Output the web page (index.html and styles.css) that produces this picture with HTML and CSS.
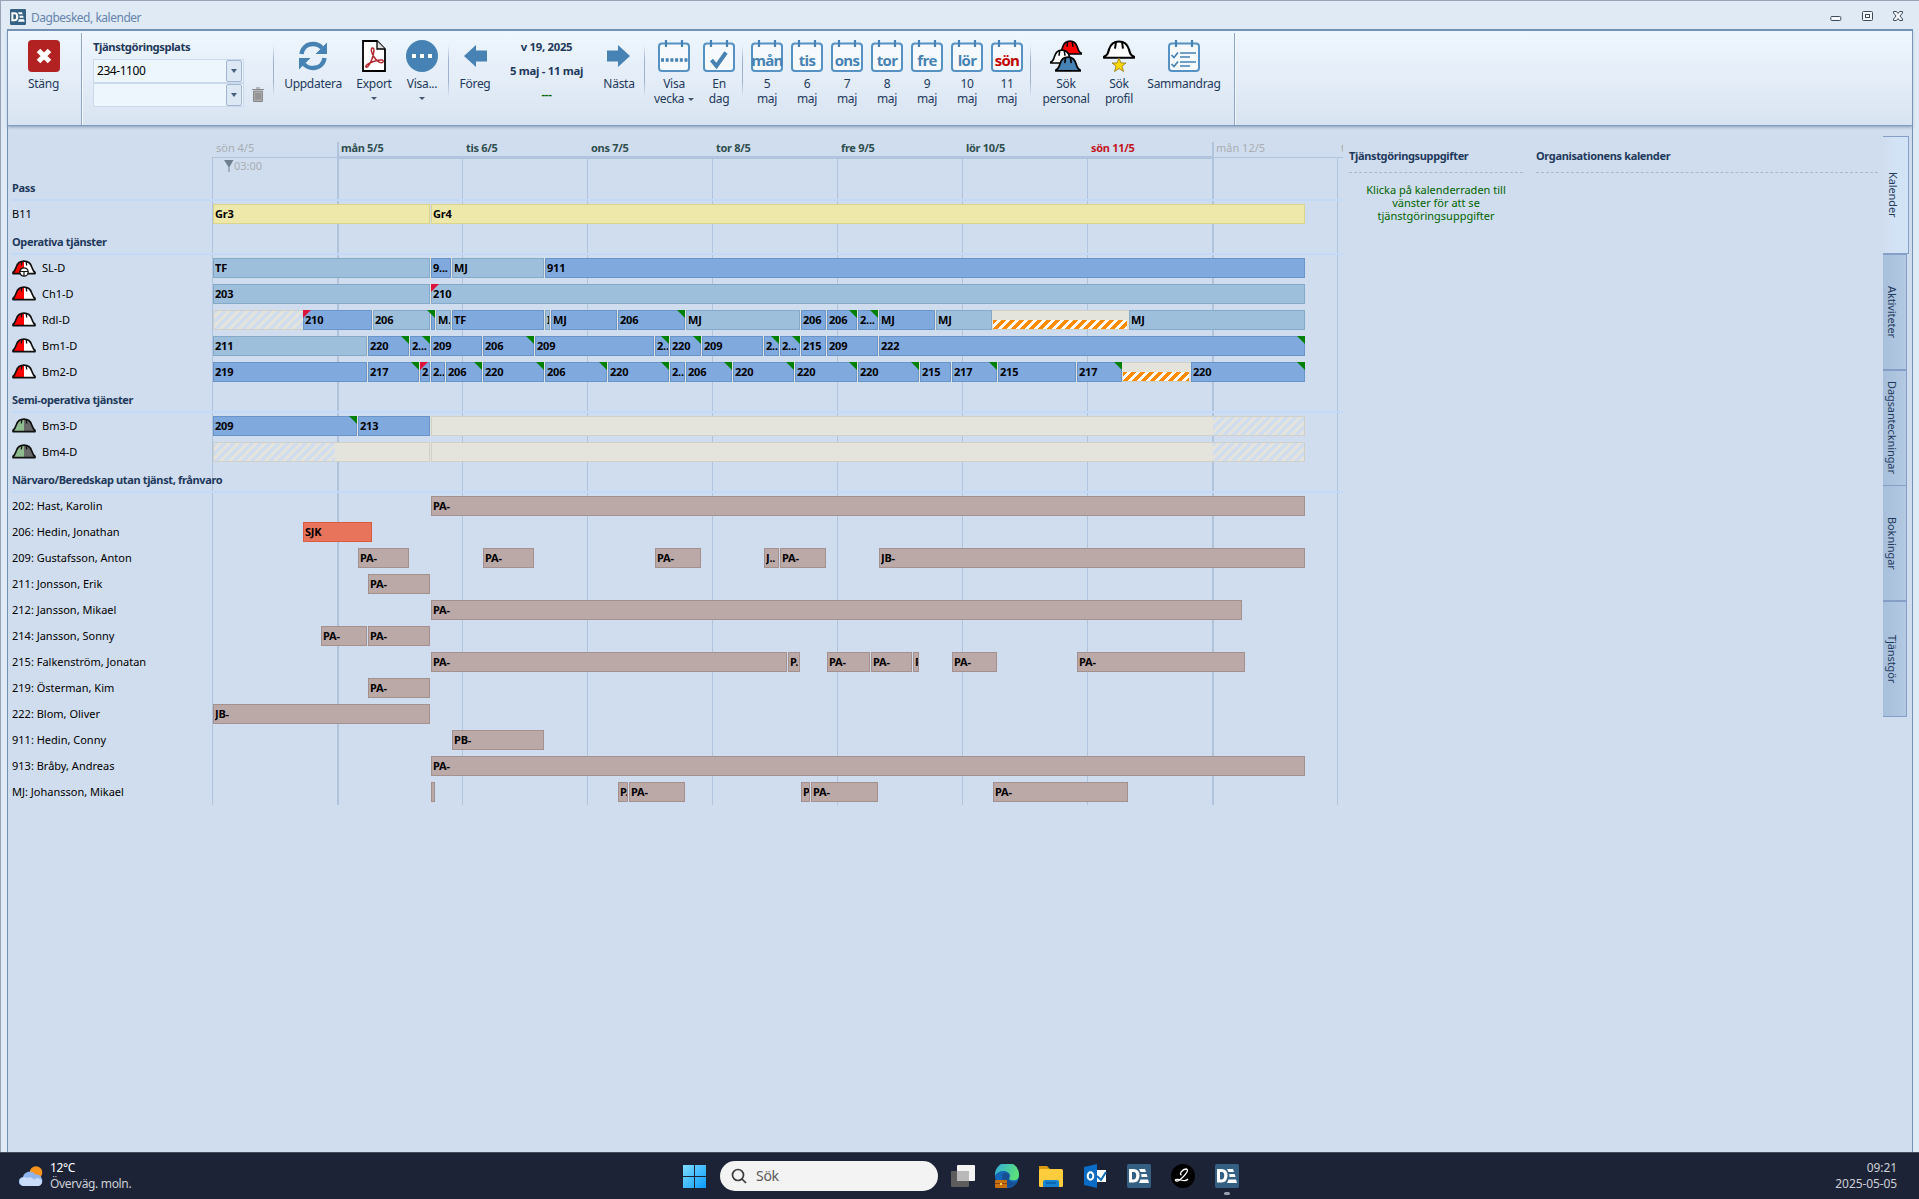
FILE: index.html
```html
<!DOCTYPE html>
<html lang="sv">
<head>
<meta charset="utf-8">
<title>Dagbesked, kalender</title>
<link rel="stylesheet" href="styles.css">
</head>
<body>
<svg class="defs" width="0" height="0" aria-hidden="true">
  <symbol id="logo" viewBox="0 0 24 24"><rect width="24" height="24" rx="2" fill="#336083"/><path fill="#fff" fill-rule="evenodd" d="M2 5h4.500q6 0 6 6.500t-6 7H2zM5 8v7.500h1.500q2.700 0 2.700-4t-2.700-3.500zM12 5h6l1 3h-5.500zM14.300 10h5.400l.8 3h-6zM13.500 15.500h7.500l1 3.500H12z"/></symbol>
  <symbol id="cal" viewBox="0 0 32 32"><rect x="1" y="3.500" width="30" height="27.500" rx="3" fill="#f6fafe" stroke="#5592c3" stroke-width="2"/><path d="M8 0v7M24 0v7" stroke="#4682b4" stroke-width="2.200"/></symbol>
  <symbol id="dome" viewBox="0 0 32 20" preserveAspectRatio="none"><path d="M1 17.500C4.500 16 5 14 6 10 7.500 4.500 11 1.500 16 1.500S24.500 4.500 26 10c1 4 1.500 6 5 7.500v1.200H1z" stroke="#000" stroke-width="2.200" stroke-linejoin="round"/><path d="M13 2l-1 7M19 2l1 7" stroke="#000" stroke-width="2" fill="none"/></symbol>
  <symbol id="helmet" viewBox="0 0 24 15"><path class="left" d="M1 12.500C3 11 3 9 4 6.500 5.500 2.500 8.500 1 12 1v12.500H1z"/><path class="right" d="M23 12.500C21 11 21 9 20 6.500 18.500 2.500 15.500 1 12 1v12.500h11z"/><path d="M1 12.400C3 11.500 3.200 9.500 4.200 7 5.600 3 8.500 1.200 12 1.200S18.400 3 19.800 7c1 2.500 1.200 4.500 3.200 5.400v1.200H1z" fill="none" stroke="#111" stroke-width="1.700" stroke-linejoin="round"/><path d="M9.800 1.500l-.5 4M14.200 1.500l.5 4" fill="none" stroke="#111" stroke-width="1.300"/></symbol>
</svg>
<div class="window">
  <header class="titlebar">
    <svg class="app-icon"><use href="#logo"/></svg>
    <span class="title">Dagbesked, kalender</span>
    <svg class="controls" width="76" height="12" fill="#f4f8fc" stroke="#3f4a5a"><rect x=".8" y="5.500" width="10" height="4" rx="1"/><rect x="32.500" y=".5" width="10" height="9" rx="1"/><rect x="35.500" y="3.500" width="4" height="3"/><path d="M63.500.5h3l1.500 2 1.500-2h3v1.500l-2.500 3 2.500 3v1.500h-3l-1.500-2-1.500 2h-3V8l2.500-3-2.500-3z"/></svg>
  </header>
  <div class="frame">
    <nav class="ribbon">
      <div class="tool w-close"><svg class="icon" viewBox="0 0 32 32"><rect width="32" height="32" rx="4" fill="#b22222"/><path d="M10.500 10.500l11 11M21.500 10.500l-11 11" stroke="#fff" stroke-width="5"/></svg><span>Stäng</span></div>
      <i class="rule-full"></i>
      <div class="place">
        <b>Tjänstgöringsplats</b>
        <div class="combos">
          <div class="combo-list">
            <div class="combo"><span>234-1100</span><i class="drop"></i></div>
            <div class="combo"><span></span><i class="drop"></i></div>
          </div>
          <svg class="trash" width="12" height="15" viewBox="0 0 12 15"><path d="M1.500 4h9v10.500h-9z" fill="#aaa" stroke="#888"/><path d="M0 2.500h12M4 1h4M4 6v6.500M6 6v6.500M8 6v6.500" stroke="#888" stroke-width="1.200"/></svg>
        </div>
      </div>
      <i class="rule"></i>
      <div class="tool w-update"><svg class="icon" viewBox="0 0 32 32"><path d="M4.500 14C5.500 7.500 10 4 16 4c4 0 7 1.500 9 4M27.500 18c-1 6.500-5.500 10-11.500 10-4 0-7-1.500-9-4" fill="none" stroke="#4682b4" stroke-width="4.400"/><path d="M30 2.500V14H18.500zM2 29.500V18h11.500z" fill="#4682b4"/></svg><span>Uppdatera</span></div>
      <div class="tool w-export"><svg class="icon" viewBox="0 0 32 32"><path d="M5 1h14l8 8v22H5z" fill="#fff" stroke="#000" stroke-width="1.800"/><path d="M19 1v8h8" fill="#ddd" stroke="#000" stroke-width="1.300"/><path d="M14 8c3-1 2 5 0 11-2 6-5 9-6 8s2-4 9-6 9-1 8 1-6 0-9-5-3-8-2-9z" fill="none" stroke="#b3282d" stroke-width="1.500"/></svg><span>Export</span><i class="caret"></i></div>
      <div class="tool w-show"><svg class="icon" viewBox="0 0 32 32"><circle cx="16" cy="16" r="16" fill="#4682b4"/><path d="M6 14h4v4H6zM14 14h4v4h-4zM22 14h4v4h-4z" fill="#fff"/></svg><span>Visa...</span><i class="caret"></i></div>
      <i class="rule"></i>
      <div class="tool w-prev"><svg class="icon" viewBox="0 0 32 32"><path d="M5 16L17 5v5.500h11v11H17V27z" fill="#4682b4"/></svg><span>Föreg</span></div>
      <div class="period"><b>v 19, 2025</b><b>5 maj - 11 maj</b><b class="green">---</b></div>
      <div class="tool w-next"><svg class="icon" viewBox="0 0 32 32"><path d="M27 16L15 5v5.500H4v11h11V27z" fill="#4682b4"/></svg><span>Nästa</span></div>
      <i class="rule"></i>
      <div class="tool w-week"><svg class="icon" viewBox="0 0 32 32"><use href="#cal"/><path d="M3 20h27" stroke="#4682b4" stroke-width="3.500" stroke-dasharray="3 1.700"/></svg><span>Visa<br>vecka <i class="caret inline"></i></span></div>
      <div class="tool w-day"><svg class="icon" viewBox="0 0 32 32"><use href="#cal"/><path d="M8.500 20l5 6L23 12.500" fill="none" stroke="#4682b4" stroke-width="4"/></svg><span>En<br>dag</span></div>
      <i class="rule days-rule"></i>
      <div class="days">
        <div class="tool"><div class="day"><svg class="icon"><use href="#cal"/></svg><b>mån</b></div><span>5<br>maj</span></div>
        <div class="tool"><div class="day"><svg class="icon"><use href="#cal"/></svg><b>tis</b></div><span>6<br>maj</span></div>
        <div class="tool"><div class="day"><svg class="icon"><use href="#cal"/></svg><b>ons</b></div><span>7<br>maj</span></div>
        <div class="tool"><div class="day"><svg class="icon"><use href="#cal"/></svg><b>tor</b></div><span>8<br>maj</span></div>
        <div class="tool"><div class="day"><svg class="icon"><use href="#cal"/></svg><b>fre</b></div><span>9<br>maj</span></div>
        <div class="tool"><div class="day"><svg class="icon"><use href="#cal"/></svg><b>lör</b></div><span>10<br>maj</span></div>
        <div class="tool"><div class="day sunday"><svg class="icon"><use href="#cal"/></svg><b>sön</b></div><span>11<br>maj</span></div>
      </div>
      <i class="rule"></i>
      <div class="tool w-staff"><svg class="icon" viewBox="0 0 32 32"><use href="#dome" x="8" y="0" width="24" height="15" fill="#f00"/><use href="#dome" x="0" y="9" width="24" height="15" fill="#fff"/><use href="#dome" x="5" y="16" width="26" height="16" fill="#4682b4"/></svg><span>Sök<br>personal</span></div>
      <div class="tool w-profile"><svg class="icon" viewBox="0 0 32 32"><use href="#dome" x="0" y="0" width="32" height="19" fill="#fff"/><path d="M16 18l2 5h5l-4 3.300 1.500 5.200-4.500-3-4.500 3 1.500-5.200L9 23h5z" fill="#ffd700" stroke="#997f20" stroke-width=".9"/></svg><span>Sök<br>profil</span></div>
      <div class="tool w-summary"><svg class="icon" viewBox="0 0 32 32"><use href="#cal"/><path d="M3.500 15l2.500 2.500 4-5M3.500 24l2.500 2.500 4-5M12 13h16M12 17h10M12 22h16M12 26h10" fill="none" stroke="#4682b4" stroke-width="1.700"/></svg><span>Sammandrag</span></div>
      <i class="rule-full"></i>
    </nav>
    <main class="main">
      <section class="timeline">
        <div class="axis">
          <div class="dates"><span class="out">sön 4/5</span><span>mån 5/5</span><span>tis 6/5</span><span>ons 7/5</span><span>tor 8/5</span><span>fre 9/5</span><span>lör 10/5</span><span class="red">sön 11/5</span><span class="out">mån 12/5</span><span class="out cut">tis 13/5</span></div>
          <div class="marker"><svg width="10" height="12"><path d="M0 0h9.500L5.500 7v5h-1V7z" fill="#708090"/></svg>03:00</div>
        </div>
        <div id="rows"></div>
      </section>
      <section class="panel duties"><h2>Tjänstgöringsuppgifter</h2><p>Klicka på kalenderraden till<br>vänster för att se<br>tjänstgöringsuppgifter</p></section>
      <section class="panel org"><h2>Organisationens kalender</h2></section>
      <aside class="tabs">
        <div class="tab active"><span>Kalender</span></div>
        <div class="tab"><span>Aktiviteter</span></div>
        <div class="tab"><span>Dagsanteckningar</span></div>
        <div class="tab"><span>Bokningar</span></div>
        <div class="tab"><span>Tjänstgör</span></div>
      </aside>
    </main>
  </div>
</div>
<footer class="taskbar">
  <div class="weather">
    <svg width="24" height="20" viewBox="0 0 24 20"><circle cx="17" cy="6.500" r="6.300" fill="#f7941e"/><path d="M4.500 20a4.500 4.500 0 0 1-.5-9A7 7 0 0 1 16.500 8.500 6 6 0 0 1 19.500 20z" fill="#8fb4ee"/><path d="M5 20a4.500 4.500 0 1 1 3-8q4-2 7 1.500 4-3 7 0A4 4 0 0 1 19.500 20z" fill="#c9dcfa"/></svg>
    <div><div class="temp">12°C</div><div>Överväg. moln.</div></div>
  </div>
  <div class="dock">
    <svg class="start" width="23" height="23" viewBox="0 0 23 23"><defs><linearGradient id="wg" x2="1" y2="1"><stop stop-color="#7fdcff"/><stop offset="1" stop-color="#0a9bff"/></linearGradient></defs><path d="M0 0h11v11H0zM12 0h11v11H12zM0 12h11v11H0zM12 12h11v11H12z" fill="url(#wg)"/></svg>
    <div class="search"><svg width="16" height="16" viewBox="0 0 16 16" fill="none" stroke="#3a3a3a" stroke-width="1.700"><circle cx="7" cy="7" r="5.500"/><path d="M11 11l4 4"/></svg>Sök</div>
    <div class="apps">
      <svg viewBox="0 0 24 24"><rect x="6" y="1" width="18" height="16" rx="1" fill="#f3f3f3"/><rect y="7" width="18" height="16" rx="1" fill="#5d5d5d"/><rect x="6" y="7" width="12" height="10" fill="#b9b9b9"/></svg>
      <svg viewBox="0 0 24 24"><defs><linearGradient id="eg" x2="1" y2=".4"><stop stop-color="#2fa8e0"/><stop offset="1" stop-color="#5be07a"/></linearGradient></defs><circle cx="12" cy="12" r="12" fill="#1467b8"/><path d="M0 10A12 12 0 0 1 24 11c0 5-4 6-8 5-3-.5-1-2-1-4 0-3-3-5-6.500-5S1 9 0 12z" fill="url(#eg)"/><path d="M7 12c0-3 3-4 5-3 3 1 3 3 2 5-1 4 3 5 8 4a12 12 0 0 1-9 5c-4-1-6-6-6-11z" fill="#174f92"/><rect y="16" width="12" height="8" rx="1" fill="#c96f0e"/><path d="M0 19.500h12" stroke="#8a4606"/><path d="M5 19h2v2H5z" fill="#ffd45a"/></svg>
      <svg viewBox="0 0 24 24"><path d="M0 2h8l3 3h12v7H0z" fill="#d99a10"/><rect y="5" width="24" height="18" rx="1.500" fill="#ffcc3e"/><path d="M4 23v-5q0-2 2-2h12q2 0 2 2v5z" fill="#1683d1"/><path d="M7 19h10" stroke="#0b5ca5" stroke-width="1.500"/></svg>
      <svg viewBox="0 0 24 24"><path d="M11 6h12v12H11z" fill="#fff"/><path d="M14 12l4 4 5-8" stroke="#0f6cbd" fill="none" stroke-width="2"/><path d="M1 3l13-3v24L1 21z" fill="#0a6cc4"/><ellipse cx="7.500" cy="12" rx="2.800" ry="3.700" fill="none" stroke="#fff" stroke-width="2"/></svg>
      <svg><use href="#logo"/></svg>
      <svg viewBox="0 0 24 24"><circle cx="12" cy="12" r="12" fill="#000"/><path d="M10.500 11c-3-.5 1-6 4.500-6 3.500.5 0 5-3 8-3.500 3.500-6.500 4.500-7.500 3.500-.8-1.500 3-1.500 5.500-.5 3 1 5 1.500 7-1" fill="none" stroke="#fff" stroke-width="1.300"/></svg>
      <div class="running"><svg><use href="#logo"/></svg></div>
    </div>
  </div>
  <div class="clock"><div>09:21</div><div>2025-05-05</div></div>
</footer>
<script src="script.js"></script>
</body>
</html>
```
FILE: styles.css
```css
* { box-sizing: border-box; }
body { margin: 0; width: 1919px; height: 1199px; overflow: hidden; display: flex; flex-direction: column; font: 12px "Noto Sans", "Open Sans", sans-serif; letter-spacing: -0.28px; color: #1e395b; background: #dfeaf5; }
svg { display: block; flex: none; }
.defs { position: absolute; }

.window { height: 1152px; display: flex; flex-direction: column; border-top: 1px solid #96a3b4; border-left: 1px solid #96a3b4; }
.titlebar { height: 28px; display: flex; align-items: center; padding: 4px 13px 0 9px; color: #6684ac; letter-spacing: -0.48px; }
.app-icon { width: 16px; height: 16px; margin-right: 5px; }
.controls { margin-left: auto; }
.frame { flex: 1; display: flex; flex-direction: column; margin: 0 6px; border: 1px solid #7291b4; border-top-width: 2px; border-bottom: 0; background: #d0ddee; }

.ribbon { height: 95px; display: flex; align-items: flex-start; border-bottom: 1px solid #7f9bbd; background: linear-gradient(#eef6fe, #e4edf8 50%, #d8e4f1); box-shadow: 0 1px 3px #8a9cb8; }
.tool { display: flex; flex-direction: column; align-items: center; padding-top: 9px; text-align: center; line-height: 15px; white-space: nowrap; }
.icon { width: 32px; height: 32px; margin-bottom: 4px; overflow: visible; }
.w-close { width: 73px; padding-right: 2px; }
.w-update { width: 60px; margin-left: 9px; }
.w-export { width: 62px; }
.w-show { width: 34px; margin-right: 9px; }
.w-prev { width: 40px; margin-left: 6px; }
.w-next { width: 42px; margin-right: 4px; }
.w-week { width: 44px; margin-left: 7px; }
.w-day { width: 46px; }
.w-staff { width: 54px; margin-left: 8px; }
.w-profile { width: 52px; }
.w-summary { width: 80px; margin-right: 9px; padding-right: 2px; }
.rule { width: 1px; height: 52px; margin-top: 14px; background: linear-gradient(transparent, #9db2cf 30%, #9db2cf 70%, transparent); }
.rule-full { width: 2px; height: 92px; margin-top: 2px; border-left: 1px solid #8ea7c8; background: #f2f8fe; }
.caret { width: 0; height: 0; margin-top: 6px; border: 3px solid transparent; border-top-color: #45556c; border-bottom: 0; }
.caret.inline { display: inline-block; margin: 0 0 2px 1px; }
.place { width: 190px; padding: 8px 0 0 10px; font-size: 11.300px; letter-spacing: -0.450px; }
.place b { display: block; height: 20px; line-height: 16px; }
.combos { display: flex; align-items: flex-end; gap: 9px; }
.combo { width: 151px; height: 24px; margin-right: -1px; display: flex; align-items: center; justify-content: space-between; padding: 0 1px 1px 3px; border: 1px solid #cad9ec; background: #edf5fd; color: #000; font-size: 12px; }
.drop { width: 16px; height: 22px; display: flex; align-items: center; justify-content: center; border: 1px solid #a3b6d2; border-radius: 2px; background: #dde8f5; }
.drop::after { content: ""; border: 3px solid transparent; border-top: 4px solid #45607f; border-bottom: 0; }
.trash { margin-bottom: 5px; }
.period { width: 103px; display: flex; flex-direction: column; gap: 8px; padding-top: 8px; text-align: center; font-size: 11.300px; line-height: 16px; }
.period .green { margin-top: -1px; }
.green { color: #006400; }
.days { display: flex; margin: 0 3px 0 4px; }
.days .tool { width: 40px; }
.day { position: relative; }
.day b { position: absolute; inset: 10px -4px auto; text-align: center; font: bold 15px/20px "Open Sans", "Noto Sans", sans-serif; letter-spacing: -0.700px; color: #4682b4; }
.day.sunday b { color: #c00000; }

.main { flex: 1; display: flex; align-items: flex-start; }
.timeline { width: 1335px; overflow: hidden; font-size: 11px; letter-spacing: 0; background:
  linear-gradient(#b0c4de, #b0c4de) 329px 16px / 2px 100% no-repeat,
  linear-gradient(#b0c4de, #b0c4de) 1204px 16px / 2px 100% no-repeat,
  linear-gradient(#b0c4de, #b0c4de) 204px 31px / 1131px 1px no-repeat,
  linear-gradient(#b0c4de, #b0c4de) 329px 30px / 877px 3px no-repeat,
  repeating-linear-gradient(to right, #b0c4de 0 1px, transparent 1px 125px) 204px 31px / 1126px 100% no-repeat; }
.axis { height: 47px; padding: 14px 0 0 205px; }
.dates { display: flex; height: 17px; line-height: 16px; font-weight: bold; color: #2f4f4f; letter-spacing: -0.300px; }
.dates span { flex: 0 0 125px; padding-left: 3px; white-space: nowrap; }
.dates .out { font-weight: normal; color: #a9adb3; letter-spacing: 0; }
.dates .cut { flex-basis: 5px; overflow: hidden; }
.dates .red { color: #c4141c; }
.marker { display: flex; align-items: center; padding: 2px 0 0 11px; line-height: 14px; color: #a9adb3; }
.section { height: 28px; margin: 0 0 0 4px; padding-top: 7px; border-bottom: 2px solid #c3d9f8; line-height: 16px; font-weight: bold; white-space: nowrap; letter-spacing: -0.350px; }
.row { height: 26px; display: flex; align-items: center; color: #000; }
.name { flex: 0 0 205px; padding: 0 0 1px 4px; display: flex; align-items: center; gap: 6px; line-height: 15px; white-space: nowrap; }
.hat { position: relative; }
.hat svg { width: 24px; height: 15px; }
.hat .wheel { position: absolute; left: 7px; top: 7px; width: 10px; height: 10px; }
.red-white { --left: #f00; --right: #fff; }
.green-gray { --left: #8fbc8f; --right: #696969; }
.left { fill: var(--left); }
.right { fill: var(--right); }
.track { display: flex; width: 1092px; height: 20px; }
.filled { background: #e4e3dc; }
.bar { position: relative; flex: none; height: 20px; border: 1px solid; padding-left: 1px; line-height: 18px; font-weight: bold; letter-spacing: -0.200px; }
.text { display: block; overflow: hidden; white-space: nowrap; height: 18px; }
.yellow { background: #eee8aa; border-color: #dbd48b; }
.dark { background: #80aade; border-color: #6994c9; }
.light { background: #9ebfdc; border-color: #85a9c9; }
.brown { background: #bba9a8; border-color: #a59090; }
.sick { background: #e8745c; border-color: #da5c40; }
.empty { background: #e4e3dc; border-color: #d0cfc8; }
.hatch, .hatch-end { background: repeating-linear-gradient(135deg, #d0ddee 0 3px, #e4e3dc 3px 6.360px); border-color: #d0cfc8; }
.hatch-end, .open-left { border-left: 0; }
.open-right { border-right: 0; }
.vacant { background: #e4e3dc; border-color: #d0cfc8; border-width: 1px 0; }
.vacant::after { content: ""; display: block; height: 9px; margin: -9px 2px 0 0; background: repeating-linear-gradient(135deg, #ff8c00 0 3.500px, #fff 3.500px 6.360px); }
.flag-green::before, .flag-red::before { content: ""; position: absolute; top: -1px; width: 8px; height: 8px; z-index: 1; }
.flag-green::before { right: -1px; background: #008000; clip-path: polygon(0 0, 100% 0, 100% 100%); }
.flag-red::before { left: -1px; background: #dc143c; clip-path: polygon(0 0, 100% 0, 0 100%); }

.panel { padding-top: 23px; font-size: 11px; letter-spacing: 0; }
.panel h2 { margin: 0; height: 24px; font-size: 11px; line-height: 14px; letter-spacing: -0.350px; border-bottom: 1px dashed #a9b8cd; }
.panel p { margin: 10px 0 0; text-align: center; line-height: 13px; color: #006400; }
.duties { width: 174px; margin-left: 6px; }
.org { width: 342px; margin-left: 13px; }
.tabs { margin: 10px 0 0 5px; }
.tab { width: 24px; height: 116px; margin-bottom: -0.25px; display: flex; align-items: center; justify-content: center; padding-right: 4px; border: 1px solid #859fc6; border-width: 1px 1px 1px 0; background: linear-gradient(to right, #a7bfdb, #b3c9e3); }
.tab span { writing-mode: vertical-rl; letter-spacing: -0.1px; font-size: 11px; }
.tab.active { width: 26px; height: 118px; background: linear-gradient(to right, #d0ddee, #d3e3f6 50%); }

.taskbar { height: 47px; display: flex; justify-content: space-between; border-top: 1px solid #474c58; background: #1d2336; color: #cdd0d6; line-height: 16px; }
.weather, .clock { width: 500px; letter-spacing: -0.33px; }
.weather { display: flex; gap: 7px; padding: 7px 0 0 19px; }
.weather svg { margin-top: 6px; }
.temp { color: #fff; }
.clock { padding: 7px 22px 0 0; text-align: right; letter-spacing: -0.1px; }
.dock { flex: 1; display: flex; align-items: flex-start; padding: 8px 0 0 183px; }
.start { margin-top: 4px; }
.search { width: 218px; height: 30px; margin: 0 13px 0 14px; display: flex; align-items: center; gap: 9px; padding-left: 11px; border-radius: 15px; background: #f3f3f3; color: #5a5a5a; font-size: 14px; }
.apps { display: flex; gap: 20px; padding-top: 3px; }
.apps svg { width: 24px; height: 24px; }
.running::after { content: ""; display: block; width: 6px; height: 3px; margin: 4px auto 0; border-radius: 2px; background: #9aa0ab; }
```
FILE: script.js
```js
// Bars are [kind, start, end, text, flag]; positions are pixels along the time axis.
const ORIGIN = 213;
const G = 'flag-green', R = 'flag-red';
const P = (a, b, t = 'PA-') => ['brown', a, b, t];
const D = (a, b, t, f) => ['dark', a, b, t, f];
const L = (a, b, t, f) => ['light', a, b, t, f];

const sections = [
  ['Pass', [
    ['B11', '', [['yellow', 213, 430, 'Gr3'], ['yellow', 431, 1305, 'Gr4']]]
  ]],
  ['Operativa tjänster', [
    ['SL-D', 'driver', [L(213, 430, 'TF'), D(431, 451, '9...'), L(452, 544, 'MJ'), D(545, 1305, '911')]],
    ['Ch1-D', 'red-white', [L(213, 430, '203'), L(431, 1305, '210', R)]],
    ['Rdl-D', 'red-white', [['hatch open-right', 213, 303, ''], D(303, 372, '210', R), L(373, 430, '206'), D(431, 435, '', G), L(436, 451, 'M.'), D(452, 544, 'TF'), L(545, 550, 'I'), D(551, 617, 'MJ'), D(618, 685, '206', G), L(686, 800, 'MJ'), D(801, 826, '206'), D(827, 857, '206', G), D(858, 878, '2...', G), D(879, 935, 'MJ'), L(936, 992, 'MJ'), ['vacant', 992, 1129, ''], L(1129, 1305, 'MJ')]],
    ['Bm1-D', 'red-white', [L(213, 367, '211'), D(368, 409, '220', G), D(410, 430, '2...', G), D(431, 482, '209'), D(483, 534, '206', G), D(535, 654, '209'), D(655, 669, '2..', G), D(670, 701, '220', G), D(702, 763, '209'), D(764, 779, '2..', G), D(780, 800, '2...', G), D(801, 826, '215'), D(827, 878, '209'), D(879, 1305, '222', G)]],
    ['Bm2-D', 'red-white', [D(213, 367, '219'), D(368, 419, '217', G), D(420, 430, '2.', R), D(431, 445, '2..'), D(446, 482, '206', G), D(483, 544, '220', G), D(545, 607, '206', G), D(608, 669, '220', G), D(670, 685, '2..'), D(686, 732, '206', G), D(733, 794, '220', G), D(795, 857, '220', G), D(858, 919, '220', G), D(920, 951, '215'), D(952, 997, '217', G), D(998, 1076, '215'), D(1077, 1122, '217', G), ['vacant', 1122, 1191, ''], D(1191, 1305, '220', G)]]
  ]],
  ['Semi-operativa tjänster', [
    ['Bm3-D', 'green-gray', [D(213, 357, '209', G), D(358, 430, '213'), ['empty open-right', 431, 1213, ''], ['hatch-end', 1213, 1305, '']]],
    ['Bm4-D', 'green-gray', [['hatch open-right', 213, 335, ''], ['empty open-left', 335, 430, ''], ['empty open-right', 431, 1213, ''], ['hatch-end', 1213, 1305, '']]]
  ]],
  ['Närvaro/Beredskap utan tjänst, frånvaro', [
    ['202: Hast, Karolin', '', [P(431, 1305)]],
    ['206: Hedin, Jonathan', '', [['sick', 303, 372, 'SJK']]],
    ['209: Gustafsson, Anton', '', [P(358, 409), P(483, 534), P(655, 701), P(764, 779, 'J..'), P(780, 826), P(879, 1305, 'JB-')]],
    ['211: Jonsson, Erik', '', [P(368, 430)]],
    ['212: Jansson, Mikael', '', [P(431, 1242)]],
    ['214: Jansson, Sonny', '', [P(321, 367), P(368, 430)]],
    ['215: Falkenström, Jonatan', '', [P(431, 787), P(788, 800, 'P.'), P(827, 870), P(871, 912), P(913, 919, 'P'), P(952, 997), P(1077, 1245)]],
    ['219: Österman, Kim', '', [P(368, 430)]],
    ['222: Blom, Oliver', '', [P(213, 430, 'JB-')]],
    ['911: Hedin, Conny', '', [P(452, 544, 'PB-')]],
    ['913: Bråby, Andreas', '', [P(431, 1305)]],
    ['MJ: Johansson, Mikael', '', [P(431, 435, ''), P(618, 628, 'P.'), P(629, 685), P(801, 810, 'P'), P(811, 878), P(993, 1128)]]
  ]]
];

const wheel = '<svg class="wheel" viewBox="0 0 10 10"><circle cx="5" cy="5" r="4.2" fill="#fff" stroke="#111" stroke-width="1.3"/><path d="M1 4.500h8M5 4.500v4.500" stroke="#111" stroke-width="1.200"/></svg>';

function hat(kind) {
  if (!kind) return '';
  const driver = kind === 'driver';
  return `<span class="hat ${driver ? 'red-white' : kind}"><svg><use href="#helmet"/></svg>${driver ? wheel : ''}</span>`;
}

function track(bars) {
  let at = ORIGIN;
  return bars.map(([kind, start, end, text, flag = '']) => {
    const gap = start - at;
    at = end;
    return `<div class="bar ${kind} ${flag}" style="margin-left:${gap}px;width:${end - start}px"><span class="text">${text}</span></div>`;
  }).join('');
}

document.getElementById('rows').innerHTML = sections.map(([title, rows]) =>
  `<div class="section">${title}</div>` + rows.map(([name, icon, bars]) =>
    `<div class="row"><div class="name">${hat(icon)}${name}</div><div class="track ${icon ? 'filled' : ''}">${track(bars)}</div></div>`
  ).join('')).join('');
```
